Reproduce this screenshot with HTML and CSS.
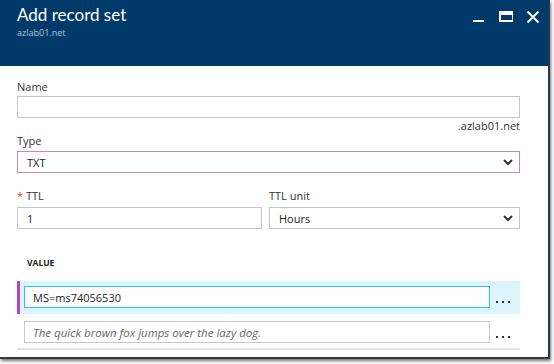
FILE: index.html
```html
<!DOCTYPE html>
<html>
<head>
<meta charset="utf-8">
<link rel="stylesheet" href="styles.css">
</head>
<body>
<div class="window">
  <div class="header">
    <div class="titles">
      <div class="title">Add record set</div>
      <div class="subtitle">azlab01.net</div>
    </div>
    <div class="controls">
      <svg class="ctl" width="14" height="14" viewBox="0 0 14 14"><rect x="1" y="9" width="11" height="2" fill="#fff"/></svg>
      <svg class="ctl" width="14" height="14" viewBox="0 0 14 14"><rect x="1" y="1" width="13" height="9" fill="none" stroke="#fff" stroke-width="2"/><rect x="1" y="1" width="13" height="3" fill="#fff"/></svg>
      <svg class="ctl" width="14" height="14" viewBox="0 0 14 14"><path d="M1.5 0.5 L12.5 11.5 M12.5 0.5 L1.5 11.5" stroke="#fff" stroke-width="2"/></svg>
    </div>
  </div>
  <div class="content">
    <div class="label l-name">Name</div>
    <div class="input"></div>
    <div class="suffix">.azlab01.net</div>
    <div class="label l-type">Type</div>
    <div class="input select purple"><span>TXT</span>
      <svg width="10" height="7" viewBox="0 0 10 7"><path d="M1 1 L5 5 L9 1" fill="none" stroke="#333" stroke-width="2"/></svg>
    </div>
    <div class="ttl-row">
      <div class="col ttl">
        <div class="label"><span class="req">*</span> TTL</div>
        <div class="input"><span>1</span></div>
      </div>
      <div class="col unit">
        <div class="label">TTL unit</div>
        <div class="input select"><span>Hours</span>
          <svg width="10" height="7" viewBox="0 0 10 7"><path d="M1 1 L5 5 L9 1" fill="none" stroke="#333" stroke-width="2"/></svg>
        </div>
      </div>
    </div>
    <div class="value-head">VALUE</div>
    <div class="vrow active">
      <div class="vinput focus"><span>MS=ms74056530</span></div>
      <div class="more"><i></i><i></i><i></i></div>
    </div>
    <div class="vrow last">
      <div class="vinput"><span class="ph">The quick brown fox jumps over the lazy dog.</span></div>
      <div class="more"><i></i><i></i><i></i></div>
    </div>
  </div>
</div>
</body>
</html>
```
FILE: styles.css
```css
html, body {
  margin: 0;
  padding: 0;
  background: #fff;
}
body {
  font-family: "Open Sans", "Noto Sans", sans-serif;
  color: #222;
  width: 554px;
  height: 364px;
  overflow: hidden;
}
.window {
  width: 548px;
  height: 357px;
  background: #fff;
  border-right: 2px solid #23384d;
  border-bottom: 2px solid #3a3a3a;
  box-shadow: 1px 2px 3px rgba(0,0,0,0.55);
  box-sizing: content-box;
}
.header {
  height: 66px;
  background: #003a6b;
  display: flex;
  justify-content: space-between;
  padding-left: 17px;
}
.title {
  color: #fff;
  font-family: Lato, "Open Sans", sans-serif;
  font-weight: 400;
  font-size: 17px;
  line-height: 24px;
  margin-top: 3px;
}
.subtitle {
  color: #b6c6d8;
  font-size: 9px;
  line-height: 12px;
}
.controls {
  display: flex;
  gap: 13px;
  padding: 11px 8px 0 0;
  align-items: flex-start;
}
.ctl { display: block; }
.content {
  padding: 13px 28px 0 17px;
}
.label {
  font-size: 11px;
  line-height: 16px;
  color: #333;
}
.l-name { margin-bottom: 1px; }
.input {
  height: 22px;
  border: 1px solid #c6c6c6;
  box-sizing: border-box;
  display: flex;
  align-items: center;
  justify-content: space-between;
  padding: 0 6px 0 9px;
  font-size: 11px;
  color: #222;
}
.suffix {
  text-align: right;
  font-size: 11px;
  line-height: 14px;
  margin-top: 1px;
  color: #333;
}
.l-type { margin-bottom: 2px; }
.purple { border-color: #c087c4; }
.select svg { display: block; }
.ttl-row {
  display: flex;
  gap: 7px;
  margin-top: 15px;
}
.ttl-row .ttl { width: 245px; flex: none; }
.ttl-row .unit { flex: 1; }
.ttl-row .label { margin-bottom: 3px; }
.req { color: #e0303a; font-size: 11px; }
.value-head {
  font-size: 8.5px;
  font-weight: 700;
  line-height: 12px;
  margin-top: 28px;
  padding-left: 10px;
  color: #222;
}
.vrow {
  display: flex;
  align-items: flex-start;
  padding-left: 7px;
}
.vrow.active {
  margin-top: 12px;
  height: 33px;
  background: #dcf4fc;
  border-left: 3px solid #b146c2;
  padding-left: 4px;
  padding-top: 5px;
  box-sizing: border-box;
}
.vrow.last {
  height: 36px;
  padding-top: 7px;
  box-sizing: border-box;
  border-bottom: 2px solid #e2e2e2;
}
.vinput {
  width: 466px;
  height: 22px;
  box-sizing: border-box;
  border: 1px solid #c6c6c6;
  background: #fff;
  display: flex;
  align-items: center;
  padding-left: 8px;
  font-size: 11px;
}
.vinput.focus { border-color: #2fc0ef; }
.ph { font-style: italic; color: #666; font-size: 11.5px; }
.more {
  display: flex;
  gap: 4px;
  margin: 15px 0 0 6px;
}
.more i {
  width: 2px;
  height: 2px;
  background: #333;
  display: block;
}
```
